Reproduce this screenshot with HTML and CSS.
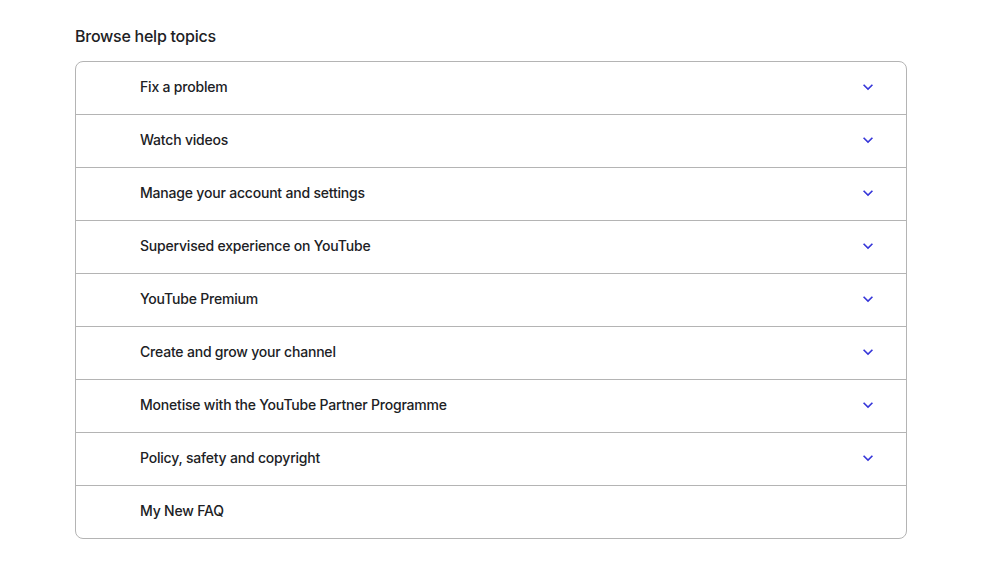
FILE: index.html
```html
<!DOCTYPE html>
<html lang="en">
<head>
<meta charset="utf-8">
<link rel="stylesheet" href="styles.css">
</head>
<body>
<main class="page">
  <h2 class="title">Browse help topics</h2>
  <div class="list">
    <div class="row"><span class="label">Fix a problem</span><svg class="chev" viewBox="0 0 24 24"><path d="M16.59 8.59L12 13.17 7.41 8.59 6 10l6 6 6-6z"/></svg></div>
    <div class="row"><span class="label">Watch videos</span><svg class="chev" viewBox="0 0 24 24"><path d="M16.59 8.59L12 13.17 7.41 8.59 6 10l6 6 6-6z"/></svg></div>
    <div class="row"><span class="label">Manage your account and settings</span><svg class="chev" viewBox="0 0 24 24"><path d="M16.59 8.59L12 13.17 7.41 8.59 6 10l6 6 6-6z"/></svg></div>
    <div class="row"><span class="label">Supervised experience on YouTube</span><svg class="chev" viewBox="0 0 24 24"><path d="M16.59 8.59L12 13.17 7.41 8.59 6 10l6 6 6-6z"/></svg></div>
    <div class="row"><span class="label">YouTube Premium</span><svg class="chev" viewBox="0 0 24 24"><path d="M16.59 8.59L12 13.17 7.41 8.59 6 10l6 6 6-6z"/></svg></div>
    <div class="row"><span class="label">Create and grow your channel</span><svg class="chev" viewBox="0 0 24 24"><path d="M16.59 8.59L12 13.17 7.41 8.59 6 10l6 6 6-6z"/></svg></div>
    <div class="row"><span class="label">Monetise with the YouTube Partner Programme</span><svg class="chev" viewBox="0 0 24 24"><path d="M16.59 8.59L12 13.17 7.41 8.59 6 10l6 6 6-6z"/></svg></div>
    <div class="row"><span class="label">Policy, safety and copyright</span><svg class="chev" viewBox="0 0 24 24"><path d="M16.59 8.59L12 13.17 7.41 8.59 6 10l6 6 6-6z"/></svg></div>
    <div class="row"><span class="label">My New FAQ</span></div>
  </div>
</main>
</body>
</html>
```

FILE: styles.css
```css
html, body {
  margin: 0;
  padding: 0;
  background: #fff;
}
body {
  font-family: Inter, Roboto, "Noto Sans", sans-serif;
  color: #202124;
}
.page {
  width: 832px;
  margin-left: 75px;
  padding-top: 24px;
}
.title {
  margin: 0 0 13px 0;
  font-size: 16px;
  line-height: 24px;
  font-weight: 500;
  letter-spacing: -0.25px;
}
.list {
  border: 1px solid #b4b4b4;
  border-radius: 8px;
  overflow: hidden;
}
.row {
  display: flex;
  align-items: center;
  height: 50px;
  padding: 0 28px 2px 64px;
  border-top: 1px solid #b4b4b4;
}
.row:first-child {
  border-top: none;
}
.label {
  flex: 1;
  font-size: 14px;
  font-weight: 500;
  line-height: 20px;
  letter-spacing: -0.2px;
}
.chev {
  width: 20px;
  height: 20px;
  fill: #3636d9;
}
```
